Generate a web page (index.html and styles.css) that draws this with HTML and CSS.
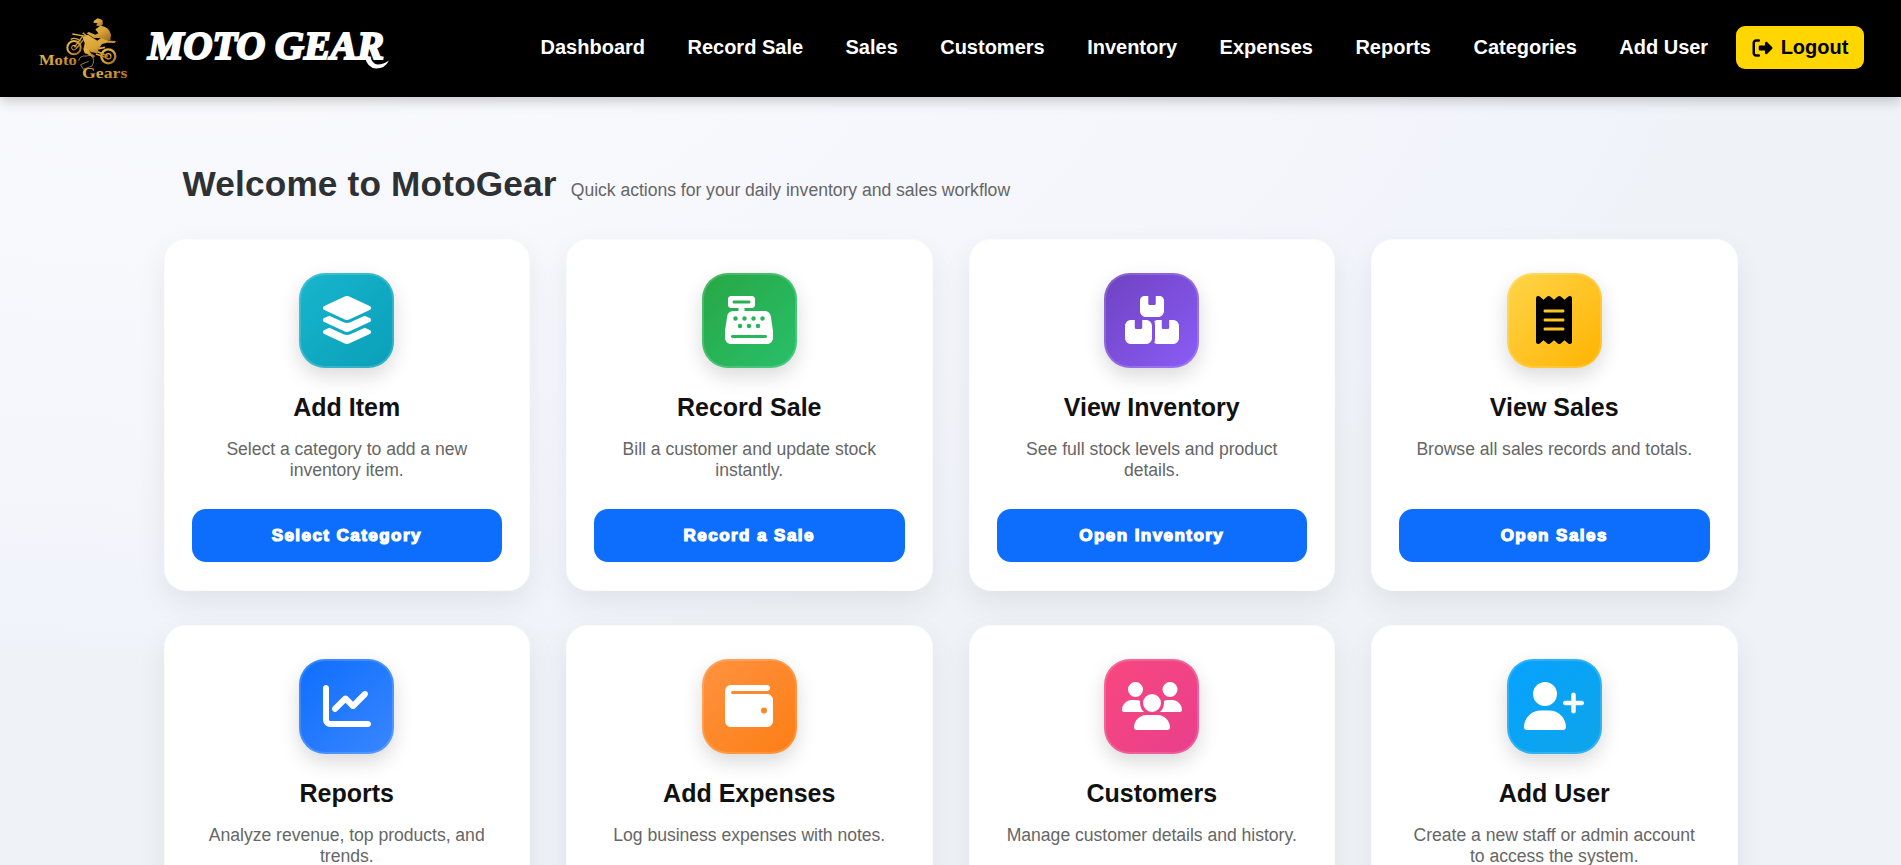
FILE: index.html
```html
<!DOCTYPE html>
<html lang="en">
<head>
<meta charset="utf-8">
<title>Moto Gear</title>
<link rel="stylesheet" href="styles.css">
</head>
<body>
<header class="topbar">
  <div class="brand">
    <svg class="brand-logo" viewBox="0 0 315 225" aria-hidden="true">
      <defs>
        <linearGradient id="gold" x1="0" y1="0" x2="1" y2="1">
          <stop offset="0" stop-color="#e6b84c"/><stop offset=".5" stop-color="#d9a436"/><stop offset="1" stop-color="#9a6420"/>
        </linearGradient>
      </defs>
      <g fill="none" stroke="url(#gold)">
        <circle cx="132" cy="113" r="20" stroke-width="6"/>
        <circle cx="132" cy="113" r="7" stroke-width="3"/>
        <circle cx="235" cy="139" r="21" stroke-width="7"/>
        <circle cx="235" cy="139" r="8" stroke-width="4"/>
        <path d="M133 112L160 76M139 116L166 82M127 72L168 79M122 88Q138 80 152 94M158 68L170 78" stroke-width="4"/>
        <path d="M196 122L234 139M198 132L232 144M206 116L225 112" stroke-width="5"/>
        <path d="M146 152Q150 136 168 138L184 136Q196 150 186 168L160 178L152 164L176 154" stroke-width="3" stroke="#8d7a55"/>
      </g>
      <g fill="url(#gold)">
        <path d="M192 32L203 25L217 30L219 43L210 50L198 46L203 40L190 38Z"/>
        <path d="M212 47Q238 50 243 74L241 92L228 90L208 84L192 84L170 70L176 66L196 74L205 70L196 58Z"/>
        <path d="M158 82L174 74L202 92L213 84L237 92L258 93L254 99L232 98L216 102L206 118L202 130L182 126L176 118L160 118L164 100Z"/>
        <path d="M160 116L176 116L182 130L196 138L190 144L172 132L164 130Z"/>
      </g>
      <g class="logo-text" fill="url(#gold)">
        <text x="27" y="165" textLength="113" lengthAdjust="spacingAndGlyphs">Moto</text>
        <text x="156" y="203" textLength="136" lengthAdjust="spacingAndGlyphs">Gears</text>
      </g>
    </svg>
    <span class="brand-name">MOTO GEAR<svg class="swash" viewBox="0 0 30 14" aria-hidden="true"><path d="M0 0L7 0Q9 8 16 9Q23 9 30 4Q25 14 14 14Q3 13 0 0Z" fill="#fff"/></svg></span>
  </div>
  <nav class="menu">
    <a>Dashboard</a><a>Record Sale</a><a>Sales</a><a>Customers</a><a>Inventory</a><a>Expenses</a><a>Reports</a><a>Categories</a><a>Add User</a>
    <button class="logout"><svg viewBox="0 0 512 512"><path d="M377.9 105.9L500.7 228.7c7.2 7.2 11.3 17.1 11.3 27.3s-4.1 20.1-11.3 27.3L377.9 406.1c-6.4 6.4-15 9.9-24 9.9c-18.7 0-33.9-15.2-33.9-33.9l0-62.1-128 0c-17.7 0-32-14.3-32-32l0-64c0-17.7 14.3-32 32-32l128 0 0-62.1c0-18.7 15.2-33.9 33.9-33.9c9 0 17.6 3.6 24 9.9zM160 96L96 96c-17.7 0-32 14.3-32 32l0 256c0 17.7 14.3 32 32 32l64 0c17.7 0 32 14.3 32 32s-14.3 32-32 32l-64 0c-53 0-96-43-96-96L0 128C0 75 43 32 96 32l64 0c17.7 0 32 14.3 32 32s-14.3 32-32 32z"/></svg>Logout</button>
  </nav>
</header>
<main class="page">
  <div class="welcome">
    <h1>Welcome to MotoGear</h1>
    <p>Quick actions for your daily inventory and sales workflow</p>
  </div>
  <section class="grid">
    <article class="card">
      <div class="tile teal"><svg viewBox="0 0 576 512"><path d="M264.5 5.2c14.9-6.9 32.1-6.9 47 0l218.6 101c8.5 3.9 13.9 12.4 13.9 21.8s-5.4 17.9-13.9 21.8l-218.6 101c-14.9 6.9-32.1 6.9-47 0L45.9 149.8C37.4 145.8 32 137.3 32 128s5.4-17.9 13.9-21.8L264.5 5.2zM476.9 209.6l53.2 24.6c8.5 3.9 13.9 12.4 13.9 21.8s-5.4 17.9-13.9 21.8l-218.6 101c-14.9 6.9-32.1 6.9-47 0L45.9 277.8C37.4 273.8 32 265.3 32 256s5.4-17.9 13.9-21.8l53.2-24.6 152 70.2c23.4 10.8 50.4 10.8 73.8 0l152-70.2zm-152 198.2l152-70.2 53.2 24.6c8.5 3.9 13.9 12.4 13.9 21.8s-5.4 17.9-13.9 21.8l-218.6 101c-14.9 6.9-32.1 6.9-47 0L45.9 405.8C37.4 401.8 32 393.3 32 384s5.4-17.9 13.9-21.8l53.2-24.6 152 70.2c23.4 10.8 50.4 10.8 73.8 0z"/></svg></div>
      <h2>Add Item</h2>
      <p>Select a category to add a new inventory item.</p>
      <button class="action">Select Category</button>
    </article>
    <article class="card">
      <div class="tile green"><svg viewBox="0 0 512 512"><path d="M64 0C46.3 0 32 14.3 32 32V96c0 17.7 14.3 32 32 32h80v32H87c-31.6 0-58.5 23.1-63.3 54.4L1.1 364.1C.4 368.8 0 373.6 0 378.4V448c0 35.3 28.7 64 64 64H448c35.3 0 64-28.7 64-64V378.4c0-4.8-.4-9.6-1.1-14.4L488.2 214.4C483.5 183.1 456.6 160 425 160H208V128h80c17.7 0 32-14.3 32-32V32c0-17.7-14.3-32-32-32H64zM96 48H256c8.8 0 16 7.2 16 16s-7.2 16-16 16H96c-8.8 0-16-7.2-16-16s7.2-16 16-16zM64 432c0-8.8 7.2-16 16-16H432c8.8 0 16 7.2 16 16s-7.2 16-16 16H80c-8.8 0-16-7.2-16-16zm48-168a24 24 0 1 1 0-48 24 24 0 1 1 0 48zm120-24a24 24 0 1 1 -48 0 24 24 0 1 1 48 0zM160 344a24 24 0 1 1 0-48 24 24 0 1 1 0 48zM328 240a24 24 0 1 1 -48 0 24 24 0 1 1 48 0zM256 344a24 24 0 1 1 0-48 24 24 0 1 1 0 48zM424 240a24 24 0 1 1 -48 0 24 24 0 1 1 48 0zM352 344a24 24 0 1 1 0-48 24 24 0 1 1 0 48z"/></svg></div>
      <h2>Record Sale</h2>
      <p>Bill a customer and update stock instantly.</p>
      <button class="action">Record a Sale</button>
    </article>
    <article class="card">
      <div class="tile purple"><svg viewBox="0 0 576 512"><path d="M248 0H208c-26.5 0-48 21.5-48 48V160c0 35.3 28.7 64 64 64H352c35.3 0 64-28.7 64-64V48c0-26.5-21.5-48-48-48H328V80c0 8.8-7.2 16-16 16H264c-8.8 0-16-7.2-16-16V0zM64 256c-35.3 0-64 28.7-64 64V448c0 35.3 28.7 64 64 64H224c35.3 0 64-28.7 64-64V320c0-35.3-28.7-64-64-64H184v80c0 8.8-7.2 16-16 16H120c-8.8 0-16-7.2-16-16V256H64zM352 512H512c35.3 0 64-28.7 64-64V320c0-35.3-28.7-64-64-64H472v80c0 8.8-7.2 16-16 16H408c-8.8 0-16-7.2-16-16V256H352c-15 0-28.8 5.1-39.7 13.8c4.9 10.4 7.7 22 7.7 34.2V464c0 12.2-2.8 23.8-7.7 34.2C323.2 506.9 337 512 352 512z"/></svg></div>
      <h2>View Inventory</h2>
      <p>See full stock levels and product details.</p>
      <button class="action">Open Inventory</button>
    </article>
    <article class="card">
      <div class="tile yellow"><svg viewBox="0 0 384 512"><path d="M14 2.2C22.5-1.7 32.5-.3 39.6 5.8L80 40.4 120.4 5.8c9-7.7 22.3-7.7 31.2 0L192 40.4 232.4 5.8c9-7.7 22.3-7.7 31.2 0L304 40.4 344.4 5.8c7.1-6.1 17.1-7.5 25.6-3.6s14 12.4 14 21.8V488c0 9.4-5.5 17.9-14 21.8s-18.5 2.5-25.6-3.6L304 471.6l-40.4 34.6c-9 7.7-22.3 7.7-31.2 0L192 471.6l-40.4 34.6c-9 7.7-22.3 7.7-31.2 0L80 471.6 39.6 506.2c-7.1 6.1-17.1 7.5-25.6 3.6S0 497.4 0 488V24C0 14.6 5.5 6.1 14 2.2zM96 144c-8.8 0-16 7.2-16 16s7.2 16 16 16H288c8.8 0 16-7.2 16-16s-7.2-16-16-16H96zM80 352c0 8.8 7.2 16 16 16H288c8.8 0 16-7.2 16-16s-7.2-16-16-16H96c-8.8 0-16 7.2-16 16zM96 240c-8.8 0-16 7.2-16 16s7.2 16 16 16H288c8.8 0 16-7.2 16-16s-7.2-16-16-16H96z"/></svg></div>
      <h2>View Sales</h2>
      <p>Browse all sales records and totals.</p>
      <button class="action">Open Sales</button>
    </article>
    <article class="card">
      <div class="tile blue"><svg viewBox="0 0 512 512"><path d="M64 64c0-17.7-14.3-32-32-32S0 46.3 0 64V400c0 44.2 35.8 80 80 80H480c17.7 0 32-14.3 32-32s-14.3-32-32-32H80c-8.8 0-16-7.2-16-16V64zm406.6 86.6c12.5-12.5 12.5-32.8 0-45.3s-32.8-12.5-45.3 0L320 210.7l-57.4-57.4c-12.5-12.5-32.8-12.5-45.3 0l-112 112c-12.5 12.5-12.5 32.8 0 45.3s32.8 12.5 45.3 0L240 221.3l57.4 57.4c12.5 12.5 32.8 12.5 45.3 0l128-128z"/></svg></div>
      <h2>Reports</h2>
      <p>Analyze revenue, top products, and trends.</p>
    </article>
    <article class="card">
      <div class="tile orange"><svg viewBox="0 0 512 512"><path d="M64 32C28.7 32 0 60.7 0 96V416c0 35.3 28.7 64 64 64H448c35.3 0 64-28.7 64-64V192c0-35.3-28.7-64-64-64H80c-8.8 0-16-7.2-16-16s7.2-16 16-16H448c17.7 0 32-14.3 32-32s-14.3-32-32-32H64zM416 272a32 32 0 1 1 0 64 32 32 0 1 1 0-64z"/></svg></div>
      <h2>Add Expenses</h2>
      <p>Log business expenses with notes.</p>
    </article>
    <article class="card">
      <div class="tile pink"><svg viewBox="0 0 640 512"><path d="M144 0a80 80 0 1 1 0 160A80 80 0 1 1 144 0zM512 0a80 80 0 1 1 0 160A80 80 0 1 1 512 0zM0 298.7C0 239.8 47.8 192 106.7 192h42.7c15.9 0 31 3.5 44.6 9.7c-1.3 7.2-1.9 14.7-1.9 22.3c0 38.2 16.8 72.5 43.3 96c-.2 0-.4 0-.7 0H21.3C9.6 320 0 310.4 0 298.7zM405.3 320c-.2 0-.4 0-.7 0c26.6-23.5 43.3-57.8 43.3-96c0-7.6-.7-15-1.9-22.3c13.6-6.3 28.7-9.7 44.6-9.7h42.7C592.2 192 640 239.8 640 298.7c0 11.8-9.6 21.3-21.3 21.3H405.3zM224 224a96 96 0 1 1 192 0 96 96 0 1 1 -192 0zM128 485.3C128 411.7 187.7 352 261.3 352H378.7C452.3 352 512 411.7 512 485.3c0 14.7-11.9 26.7-26.7 26.7H154.7c-14.7 0-26.7-11.9-26.7-26.7z"/></svg></div>
      <h2>Customers</h2>
      <p>Manage customer details and history.</p>
    </article>
    <article class="card">
      <div class="tile sky"><svg viewBox="0 0 640 512"><path d="M96 128a128 128 0 1 1 256 0A128 128 0 1 1 96 128zM0 482.3C0 383.8 79.8 304 178.3 304h91.4C368.2 304 448 383.8 448 482.3c0 16.4-13.3 29.7-29.7 29.7H29.7C13.3 512 0 498.7 0 482.3zM504 312V248H440c-13.3 0-24-10.7-24-24s10.7-24 24-24h64V136c0-13.3 10.7-24 24-24s24 10.7 24 24v64h64c13.3 0 24 10.7 24 24s-10.7 24-24 24H552v64c0 13.3-10.7 24-24 24s-24-10.7-24-24z"/></svg></div>
      <h2>Add User</h2>
      <p>Create a new staff or admin account to access the system.</p>
    </article>
  </section>
</main>
</body>
</html>
```
FILE: styles.css
```css
* { box-sizing: border-box; }
html, body { height: 100%; }
body {
  margin: 0;
  overflow: hidden;
  font-family: "Liberation Sans", Arial, sans-serif;
  background:
    radial-gradient(1520px 620px at 10% 5%, #fafafd 0%, #f6f7fc 55%, #f2f4fb 88%, rgba(239, 243, 248, 0) 100%),
    #eff3f8;
}
.topbar {
  position: relative;
  display: flex;
  align-items: center;
  justify-content: space-between;
  height: 97px;
  padding: 0 37px 0 30px;
  background: #000;
  box-shadow: 0 4px 12px rgba(0, 0, 0, .2);
}
.brand { display: flex; align-items: center; gap: 13px; }
.brand-logo { width: 105px; height: 75px; margin-bottom: 2px; }
.logo-text { font: bold 46px "Liberation Serif", serif; }
.brand-name {
  position: relative;
  margin-bottom: 5px;
  color: #fff;
  font: italic bold 40px/46px "Liberation Serif", serif;
  -webkit-text-stroke: 2.2px #fff;
  white-space: nowrap;
}
.swash { position: absolute; right: -5px; bottom: 0; width: 24px; height: 12px; }
.menu { display: flex; align-items: center; gap: 42.45px; padding-bottom: 2px; }
.menu a { color: #fff; font-size: 20px; font-weight: 700; white-space: nowrap; }
.logout {
  display: flex;
  align-items: center;
  justify-content: center;
  gap: 8px;
  width: 128px;
  height: 43px;
  margin-left: -14.6px;
  padding: 0;
  border: 0;
  border-radius: 9px;
  background: #ffd600;
  color: #000;
  font: bold 20px "Liberation Sans", Arial, sans-serif;
}
.logout svg { width: 21px; height: 20px; }
.page { width: 1574px; margin: 0 auto; padding-top: 66px; }
.welcome { display: flex; align-items: baseline; gap: 14px; padding-left: 19px; height: 76px; }
.welcome h1 { margin: 0; color: #2d3134; font-size: 35.2px; line-height: 42px; letter-spacing: .18px; }
.welcome p { margin: 0; color: #666; font-size: 17.6px; letter-spacing: -.03px; }
.grid { display: grid; grid-template-columns: repeat(4, 1fr); grid-auto-rows: 352px; gap: 34px 36px; }
.card {
  display: flex;
  flex-direction: column;
  align-items: center;
  padding: 34px 28px 29px;
  border-radius: 22px;
  background: #fff;
  box-shadow: 0 12px 30px rgba(0, 0, 0, .07), inset 0 0 0 1px rgba(0, 0, 0, .015);
  text-align: center;
}
.tile {
  display: flex;
  align-items: center;
  justify-content: center;
  flex: none;
  width: 95px;
  height: 95px;
  padding-bottom: 2px;
  border-radius: 26px;
  box-shadow: 0 8px 20px rgba(0, 0, 0, .15), inset 0 0 0 2px rgba(255, 255, 255, .16);
}
.tile svg { height: 48px; fill: #fff; }
.teal { background: linear-gradient(135deg, #17b5cd, #0a9fb9); }
.green { background: linear-gradient(135deg, #28a745, #28c06a); }
.purple { background: linear-gradient(135deg, #6f42c1, #8b5cf6); }
.yellow { background: linear-gradient(135deg, #ffd54a, #ffb300); }
.yellow svg { fill: #000; }
.blue { background: linear-gradient(135deg, #0d6efd, #3a86ff); }
.orange { background: linear-gradient(135deg, #ff9240, #fd7e14); }
.pink { background: linear-gradient(135deg, #f9487f, #e83e8c); }
.sky { background: linear-gradient(135deg, #06a2ff, #0ea5e9); }
.card h2 { margin: 24px 0 17px; color: #111; font-size: 25px; line-height: 30px; }
.card p { margin: 0; padding: 0 8px; color: #666; font-size: 17.6px; line-height: 21px; letter-spacing: -.03px; }
.action {
  width: 100%;
  height: 53px;
  flex: none;
  margin-top: auto;
  padding-top: 2px;
  border: 0;
  border-radius: 14px;
  background: #0d6efd;
  color: #fff;
  font: bold 17px "Liberation Sans", Arial, sans-serif;
  letter-spacing: 1.45px;
  -webkit-text-stroke: 1.2px #fff;
}
```
